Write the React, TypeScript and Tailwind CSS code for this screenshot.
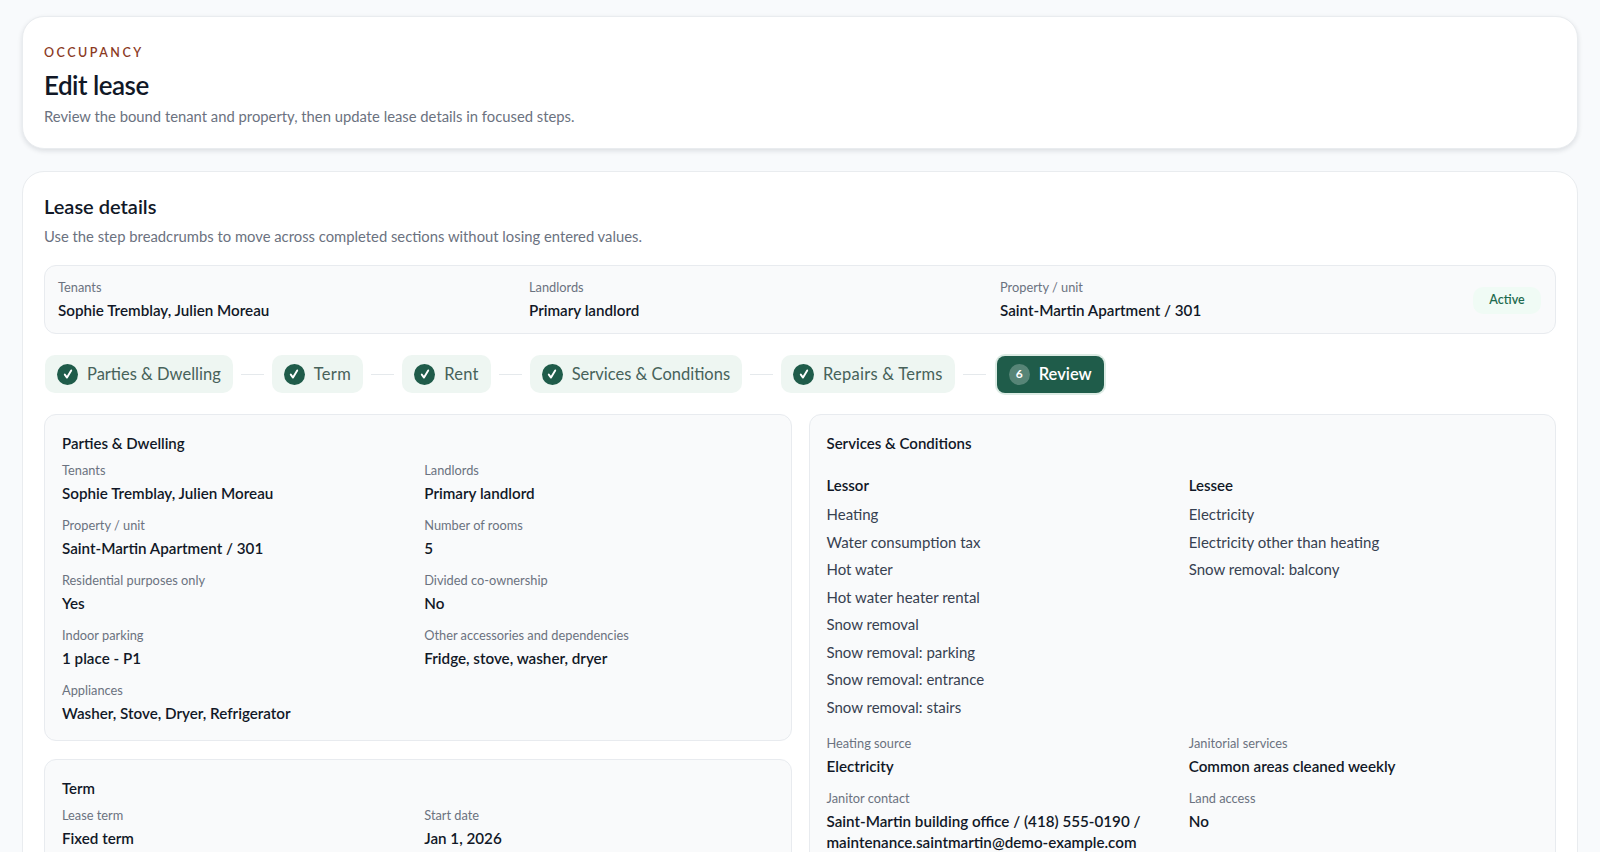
import React from "react";

const Check = () => (
  <span className="flex h-[21px] w-[21px] shrink-0 items-center justify-center rounded-full bg-[#1f5c4a] text-white">
    <svg width="12" height="12" viewBox="0 0 12 12" fill="none" stroke="currentColor" strokeWidth="1.9" strokeLinecap="round" strokeLinejoin="round">
      <path d="M2.8 6.6 5 9.6 9.2 2.4" />
    </svg>
  </span>
);

const Connector = () => <span className="h-px w-[23px] bg-[#e5e9ec]" />;

const Step = ({ label, tracking = "" }: { label: string; tracking?: string }) => (
  <div className="flex h-[38px] items-center gap-[9px] rounded-[10px] bg-[#eef6f2] pl-3 pr-[12px] text-[16.5px] leading-none text-[#47625a]">
    <Check />
    <span className={tracking}>{label}</span>
  </div>
);

const Field = ({ label, value }: { label: string; value: React.ReactNode }) => (
  <div className="min-w-0">
    <div className="text-[12.8px] leading-[18px] text-[#6b7280]">{label}</div>
    <div className="mt-1 text-[15.2px] font-semibold leading-[21px] text-[#111827]">{value}</div>
  </div>
);

const Panel = ({ title, children }: { title: string; children: React.ReactNode }) => (
  <section className="rounded-[12px] border border-[#e8ebef] bg-[#f9fafb] px-[17px] pt-[17px] pb-4">
    <h3 className="text-[15px] font-semibold leading-[22px] text-[#111827]">{title}</h3>
    {children}
  </section>
);

const lessor = [
  "Heating",
  "Water consumption tax",
  "Hot water",
  "Hot water heater rental",
  "Snow removal",
  "Snow removal: parking",
  "Snow removal: entrance",
  "Snow removal: stairs",
];
const lessee = ["Electricity", "Electricity other than heating", "Snow removal: balcony"];

export default function App() {
  return (
    <div className="h-[852px] overflow-hidden bg-[#f8fafc] px-[22px] pt-[16px] font-['Lato','Liberation_Sans',sans-serif] text-[#111827]">
      <header className="h-[133px] rounded-[22px] border border-[#e9ecef] bg-white px-[21px] pt-[27px] shadow-[0_2px_5px_rgba(15,23,42,0.12)]">
        <div className="text-[12.5px] font-semibold leading-[18px] tracking-[0.2em] text-[#8b3a1f]">OCCUPANCY</div>
        <h1 className="mt-[6px] text-[26px] font-semibold leading-[34px] tracking-[-0.02em] text-[#111827]">Edit lease</h1>
        <p className="mt-[4px] text-[14.8px] leading-[21px] text-[#6b7280]">Review the bound tenant and property, then update lease details in focused steps.</p>
      </header>

      <main className="mt-[22px] rounded-[22px] border border-[#e9ecef] bg-white px-[21px] pt-[21px] pb-6">
        <h2 className="text-[20px] font-semibold leading-[26px] text-[#111827]">Lease details</h2>
        <p className="mt-[6px] text-[14.8px] leading-[22px] text-[#6b7280]">Use the step breadcrumbs to move across completed sections without losing entered values.</p>

        <div className="mt-[18px] flex h-[69px] items-center gap-4 rounded-[12px] border border-[#e8ebef] bg-[#f9fafb] pl-[13px] pr-[14px]">
          <div className="grid flex-1 grid-cols-3 gap-x-[14px]">
            <Field label="Tenants" value="Sophie Tremblay, Julien Moreau" />
            <Field label="Landlords" value="Primary landlord" />
            <Field label="Property / unit" value="Saint-Martin Apartment / 301" />
          </div>
          <span className="mt-px flex h-[27px] w-[68px] shrink-0 items-center justify-center rounded-[10px] bg-[#f0fbf5] text-[12.5px] font-semibold text-[#1f6b4f]">Active</span>
        </div>

        <nav className="ml-px mt-[21px] flex items-center gap-2">
          <Step label="Parties & Dwelling" />
          <Connector />
          <Step label="Term" tracking="tracking-[0.35px]" />
          <Connector />
          <Step label="Rent" tracking="tracking-[0.25px]" />
          <Connector />
          <Step label="Services & Conditions" />
          <Connector />
          <Step label="Repairs & Terms" tracking="tracking-[0.25px]" />
          <Connector />
          <div className="ml-[3px] flex h-[37px] items-center gap-[9px] rounded-[8px] bg-[#1f5c4a] pl-[12px] pr-[12px] text-[16.5px] font-semibold leading-none text-white ring-2 ring-[#dcebe4]">
            <span className="flex h-[21px] w-[21px] items-center justify-center rounded-full bg-white/25 text-[12px] font-bold">6</span>
            Review
          </div>
        </nav>

        <div className="mt-[21px] grid grid-cols-2 gap-[17px]">
          <div className="flex flex-col gap-[18px]">
            <Panel title="Parties & Dwelling">
              <div className="mt-[7px] grid grid-cols-2 gap-x-[13px] gap-y-3">
                <Field label="Tenants" value="Sophie Tremblay, Julien Moreau" />
                <Field label="Landlords" value="Primary landlord" />
                <Field label="Property / unit" value="Saint-Martin Apartment / 301" />
                <Field label="Number of rooms" value="5" />
                <Field label="Residential purposes only" value="Yes" />
                <Field label="Divided co-ownership" value="No" />
                <Field label="Indoor parking" value="1 place - P1" />
                <Field label="Other accessories and dependencies" value="Fridge, stove, washer, dryer" />
                <Field label="Appliances" value="Washer, Stove, Dryer, Refrigerator" />
              </div>
            </Panel>
            <Panel title="Term">
              <div className="mt-[7px] grid grid-cols-2 gap-x-[13px] gap-y-3">
                <Field label="Lease term" value="Fixed term" />
                <Field label="Start date" value="Jan 1, 2026" />
              </div>
            </Panel>
          </div>

          <Panel title="Services & Conditions">
            <div className="mt-[20px] grid grid-cols-2 gap-x-[13px]">
              <div>
                <div className="text-[15px] font-semibold leading-[22px]">Lessor</div>
                <ul className="mt-[5px]">
                  {lessor.map((t) => (
                    <li key={t} className="text-[15px] leading-[27.5px] text-[#374151]">{t}</li>
                  ))}
                </ul>
              </div>
              <div>
                <div className="text-[15px] font-semibold leading-[22px]">Lessee</div>
                <ul className="mt-[5px]">
                  {lessee.map((t) => (
                    <li key={t} className="text-[15px] leading-[27.5px] text-[#374151]">{t}</li>
                  ))}
                </ul>
              </div>
            </div>
            <div className="mt-[13px] grid grid-cols-2 gap-x-[13px] gap-y-3">
              <Field label="Heating source" value="Electricity" />
              <Field label="Janitorial services" value="Common areas cleaned weekly" />
              <Field
                label="Janitor contact"
                value={<>Saint-Martin building office / (418) 555-0190 /<br />maintenance.saintmartin@demo-example.com</>}
              />
              <Field label="Land access" value="No" />
            </div>
          </Panel>
        </div>
      </main>
    </div>
  );
}
